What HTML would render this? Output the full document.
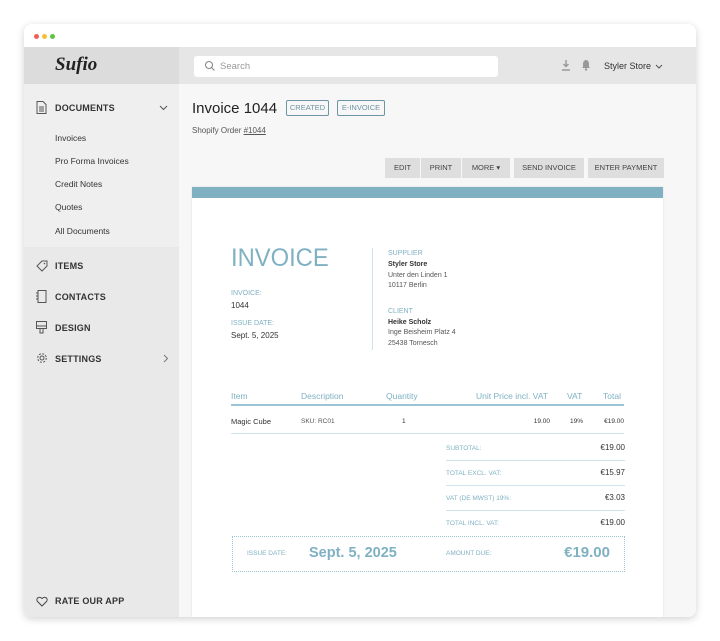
<!DOCTYPE html>
<html><head><meta charset="utf-8"><style>
*{margin:0;padding:0;box-sizing:border-box}
body{width:720px;height:641px;background:#fff;font-family:"Liberation Sans",sans-serif;position:relative;overflow:hidden;color:#333}
.win{position:absolute;left:24px;top:24px;width:672px;height:593px;border-radius:8px;background:#fff;box-shadow:0 2px 8px rgba(0,0,0,.18);overflow:hidden}
.dot{position:absolute;top:10px;width:5px;height:5px;border-radius:50%}
.abs{position:absolute}
.side{left:0;top:23px;width:155px;height:570px;background:#e9e9e9}
.sidehead{left:0;top:23px;width:155px;height:37px;background:#dcdcdc}
.docs{left:0;top:60px;width:155px;height:163px;background:#efefef}
.main{left:155px;top:23px;width:517px;height:570px;background:#f7f7f7}
.tophead{left:155px;top:23px;width:517px;height:37px;background:#e6e6e6}
.nav{font-size:9px;font-weight:bold;color:#333;letter-spacing:.2px}
.sub{font-size:8.5px;color:#333}
.btn{position:absolute;top:134px;height:20px;background:#dedede;font-size:7.5px;color:#444;text-align:center;line-height:20px}
.lbl{color:#7fb1c3;font-size:7px}
.t{font-size:7px;color:#333}
.hl{position:absolute;height:1px;background:#cfe3ea}
</style></head><body>
<div class="win">
<div class="dot" style="left:10px;background:#ee5f57"></div>
<div class="dot" style="left:18px;background:#f4bd3a"></div>
<div class="dot" style="left:26px;background:#5ec443"></div>
<div class="abs side"></div><div class="abs sidehead"></div><div class="abs docs"></div>
<div class="abs main"></div><div class="abs tophead"></div>
<div class="abs" style="left:31px;top:30px;font-family:'Liberation Serif',serif;font-style:italic;font-weight:bold;font-size:19px;color:#222">Sufio</div>
<div class="abs" style="left:170px;top:32px;width:304px;height:21px;background:#fff;border-radius:3px"></div>
<svg class="abs" style="left:180px;top:36px" width="12" height="12" viewBox="0 0 12 12"><circle cx="5" cy="5" r="3.5" fill="none" stroke="#888" stroke-width="1.1"/><path d="M7.6 7.6L10.5 10.5" stroke="#888" stroke-width="1.1"/></svg>
<div class="abs" style="left:196px;top:37px;font-size:9.5px;color:#999">Search</div>
<svg class="abs" style="left:537px;top:36px" width="10" height="11" viewBox="0 0 10 11"><path d="M5 0v6M2.5 4L5 6.5 7.5 4M1 10h8" stroke="#999" stroke-width="1.4" fill="none"/></svg>
<svg class="abs" style="left:557px;top:35px" width="10" height="12" viewBox="0 0 10 12"><path d="M5 1C3 1 2 3 2 5v3L1 9h8L8 8V5C8 3 7 1 5 1z" fill="#999"/><circle cx="5" cy="10.5" r="1.2" fill="#999"/></svg>
<div class="abs" style="left:580px;top:37px;font-size:9px;color:#333">Styler Store</div>
<svg class="abs" style="left:631px;top:40px" width="8" height="5"><path d="M1 1l3 3 3-3" stroke="#555" fill="none"/></svg>
<svg class="abs" style="left:12px;top:77px" width="11" height="13" viewBox="0 0 11 13"><path d="M1 .5h6l3 3v9H1z" fill="none" stroke="#555"/><path d="M3 6h5M3 8h5M3 10h5" stroke="#555"/></svg>
<div class="abs nav" style="left:31px;top:79px">DOCUMENTS</div>
<svg class="abs" style="left:135px;top:81px" width="9" height="6"><path d="M1 1l3.5 3.5L8 1" stroke="#555" fill="none"/></svg>
<div class="abs sub" style="left:31px;top:109px">Invoices</div>
<div class="abs sub" style="left:31px;top:132px">Pro Forma Invoices</div>
<div class="abs sub" style="left:31px;top:155px">Credit Notes</div>
<div class="abs sub" style="left:31px;top:178px">Quotes</div>
<div class="abs sub" style="left:31px;top:202px">All Documents</div>
<svg class="abs" style="left:12px;top:236px" width="12" height="12" viewBox="0 0 12 12"><path d="M6 1h5v5l-5 5-5-5z" fill="none" stroke="#555"/><circle cx="8.5" cy="3.5" r=".8" fill="#555"/></svg>
<div class="abs nav" style="left:31px;top:237px">ITEMS</div>
<svg class="abs" style="left:12px;top:266px" width="11" height="13"><rect x="2" y=".5" width="8" height="12" fill="none" stroke="#555"/><path d="M0 3h2M0 6h2M0 9h2" stroke="#555"/></svg>
<div class="abs nav" style="left:31px;top:268px">CONTACTS</div>
<svg class="abs" style="left:12px;top:297px" width="11" height="13"><rect x=".5" y=".5" width="10" height="7" fill="none" stroke="#555"/><path d="M.5 5h10M4 8v4h3V8" stroke="#555" fill="none"/></svg>
<div class="abs nav" style="left:31px;top:299px">DESIGN</div>
<svg class="abs" style="left:12px;top:328px" width="12" height="12" viewBox="0 0 12 12"><circle cx="6" cy="6" r="2" fill="none" stroke="#555"/><circle cx="6" cy="6" r="4.3" fill="none" stroke="#555" stroke-dasharray="2 1.4"/></svg>
<div class="abs nav" style="left:31px;top:330px">SETTINGS</div>
<svg class="abs" style="left:139px;top:330px" width="6" height="9"><path d="M1 1l3.5 3.5L1 8" stroke="#777" fill="none"/></svg>
<svg class="abs" style="left:12px;top:572px" width="12" height="11" viewBox="0 0 12 11"><path d="M6 10L1.5 5.5C-.5 3 2.5-.5 6 2.5 9.5-.5 12.5 3 10.5 5.5z" fill="none" stroke="#444"/></svg>
<div class="abs nav" style="left:31px;top:572px">RATE OUR APP</div>
<div class="abs" style="left:168px;top:76px;font-size:15px;color:#222">Invoice 1044</div>
<div class="abs" style="left:262px;top:76px;width:43px;height:16px;border:1px solid #6f95a5;border-radius:2px;font-size:7.5px;color:#6f95a5;text-align:center;line-height:14px">CREATED</div>
<div class="abs" style="left:313px;top:76px;width:48px;height:16px;border:1px solid #6f95a5;border-radius:2px;font-size:7.5px;color:#6f95a5;text-align:center;line-height:14px">E-INVOICE</div>
<div class="abs" style="left:168px;top:102px;font-size:8px;color:#555">Shopify Order <u>#1044</u></div>
<div class="btn" style="left:361px;width:35px">EDIT</div>
<div class="btn" style="left:397px;width:40px">PRINT</div>
<div class="btn" style="left:438px;width:48px">MORE ▾</div>
<div class="btn" style="left:490px;width:70px">SEND INVOICE</div>
<div class="btn" style="left:564px;width:76px">ENTER PAYMENT</div>
<div class="abs" style="left:168px;top:163px;width:471px;height:430px;background:#fff;box-shadow:0 0 2px rgba(0,0,0,.12)"></div>
<div class="abs" style="left:168px;top:163px;width:471px;height:11px;background:#7fb1c3"></div>
<div class="abs" style="left:207px;top:220px;font-size:25px;color:#7fb1c3;transform:scaleX(.95);transform-origin:left">INVOICE</div>
<div class="abs lbl" style="left:207px;top:266px">INVOICE:</div>
<div class="abs" style="left:207px;top:277px;font-size:8px">1044</div>
<div class="abs lbl" style="left:207px;top:296px">ISSUE DATE:</div>
<div class="abs" style="left:207px;top:307px;font-size:8px">Sept. 5, 2025</div>
<div class="abs" style="left:348px;top:224px;width:1px;height:102px;background:#cfe3ea"></div>
<div class="abs lbl" style="left:364px;top:226px">SUPPLIER</div>
<div class="abs t" style="left:364px;top:237px;font-weight:bold">Styler Store</div>
<div class="abs t" style="left:364px;top:248px;color:#555">Unter den Linden 1</div>
<div class="abs t" style="left:364px;top:258px;color:#555">10117 Berlin</div>
<div class="abs lbl" style="left:364px;top:284px">CLIENT</div>
<div class="abs t" style="left:364px;top:295px;font-weight:bold">Heike Scholz</div>
<div class="abs t" style="left:364px;top:305px;color:#555">Inge Beisheim Platz 4</div>
<div class="abs t" style="left:364px;top:316px;color:#555">25438 Tornesch</div>
<div class="abs" style="left:207px;top:367px;font-size:8.5px;color:#7fb1c3">Item</div>
<div class="abs" style="left:277px;top:367px;font-size:8.5px;color:#7fb1c3">Description</div>
<div class="abs" style="left:362px;top:367px;font-size:8.5px;color:#7fb1c3">Quantity</div>
<div class="abs" style="left:452px;top:367px;font-size:8.5px;color:#7fb1c3">Unit Price incl. VAT</div>
<div class="abs" style="left:543px;top:367px;font-size:8.5px;color:#7fb1c3">VAT</div>
<div class="abs" style="left:579px;top:367px;font-size:8.5px;color:#7fb1c3">Total</div>
<div class="hl" style="left:207px;top:380px;width:393px;height:1.5px;background:#9cc5d3"></div>
<div class="abs t" style="left:207px;top:393px;font-size:7.5px">Magic Cube</div>
<div class="abs t" style="left:277px;top:394px;font-size:6.5px;color:#555">SKU: RC01</div>
<div class="abs t" style="left:378px;top:394px;font-size:6.5px">1</div>
<div class="abs t" style="left:500px;top:394px;width:26px;text-align:right;font-size:6.5px">19.00</div>
<div class="abs t" style="left:546px;top:394px;font-size:6.5px">19%</div>
<div class="abs t" style="left:570px;top:394px;width:30px;text-align:right;font-size:6.5px">€19.00</div>
<div class="hl" style="left:207px;top:409px;width:393px"></div>
<div class="abs lbl" style="left:422px;top:421px;font-size:6.5px">SUBTOTAL:</div>
<div class="abs t" style="left:550px;top:419px;width:51px;text-align:right;font-size:8px">€19.00</div>
<div class="hl" style="left:422px;top:436px;width:179px"></div>
<div class="abs lbl" style="left:422px;top:446px;font-size:6.5px">TOTAL EXCL. VAT:</div>
<div class="abs t" style="left:550px;top:444px;width:51px;text-align:right;font-size:8px">€15.97</div>
<div class="hl" style="left:422px;top:461px;width:179px"></div>
<div class="abs lbl" style="left:422px;top:471px;font-size:6.5px">VAT (DE MWST) 19%:</div>
<div class="abs t" style="left:550px;top:469px;width:51px;text-align:right;font-size:8px">€3.03</div>
<div class="hl" style="left:422px;top:486px;width:179px"></div>
<div class="abs lbl" style="left:422px;top:496px;font-size:6.5px">TOTAL INCL. VAT:</div>
<div class="abs t" style="left:550px;top:494px;width:51px;text-align:right;font-size:8px">€19.00</div>
<div class="abs" style="left:208px;top:512px;width:393px;height:36px;border:1px dotted #9cc5d3"></div>
<div class="abs lbl" style="left:223px;top:526px;font-size:6.5px">ISSUE DATE:</div>
<div class="abs" style="left:285px;top:521px;font-size:14.5px;font-weight:bold;color:#7fb1c3">Sept. 5, 2025</div>
<div class="abs lbl" style="left:422px;top:526px;font-size:6.5px">AMOUNT DUE:</div>
<div class="abs" style="left:520px;top:520px;width:66px;text-align:right;font-size:15px;font-weight:bold;color:#7fb1c3">€19.00</div>
</div>
</body></html>
